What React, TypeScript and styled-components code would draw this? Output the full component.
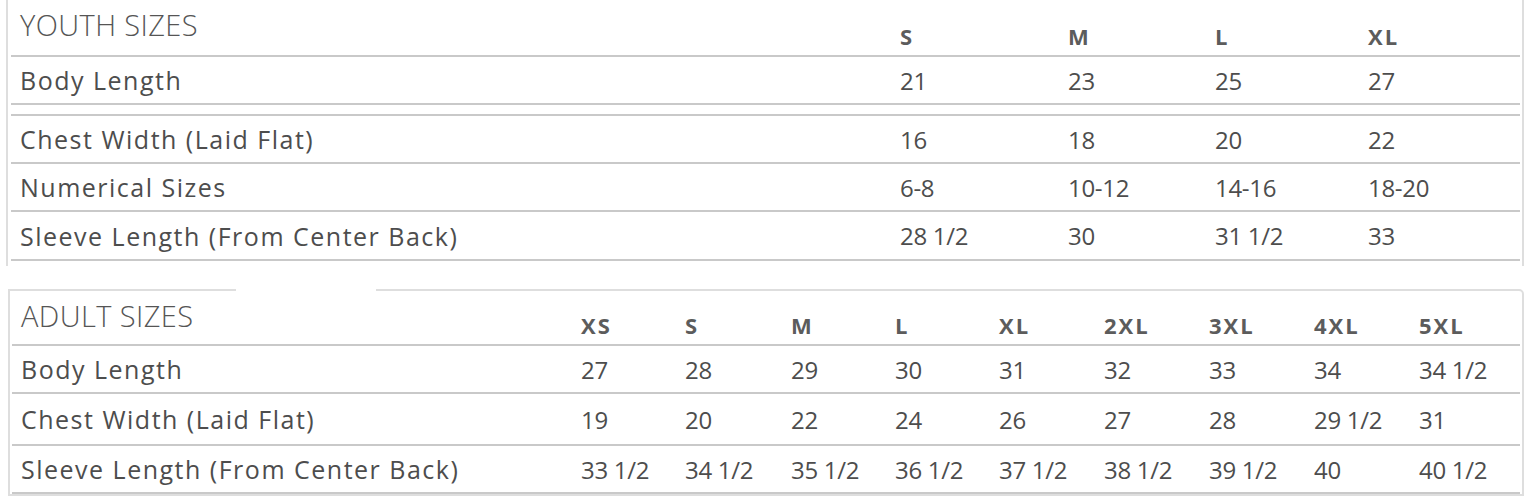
import React from 'react';
import styled, { createGlobalStyle } from 'styled-components';

type SizeRow = {
    label: string;
    values: string[];
    height?: number;
};

type SizeTableProps = {
    title: string;
    sizes: string[];
    rows: (SizeRow | 'spacer')[];
    columns: string;
    headerHeight: number;
};

const GlobalStyle = createGlobalStyle`
    body {
        margin: 0;
        background: #ffffff;
        font-family: 'Open Sans', 'Liberation Sans', sans-serif;
        color: #4d4d4d;
    }
`;

const Page = styled.div`
    display: flex;
    flex-direction: column;
    gap: 23px;
    width: 1534px;
    height: 500px;
    overflow: hidden;
`;

const YouthBox = styled.section`
    margin-left: 6px;
    width: 1518px;
    box-sizing: border-box;
    border-left: 2px solid #dedede;
    border-right: 2px solid #dedede;
    padding: 0 2px 5px 3px;
`;

const AdultBox = styled.fieldset`
    margin: 0 0 0 8px;
    width: 1516px;
    box-sizing: border-box;
    border: 2px solid #dedede;
    border-radius: 0 5px 0 0;
    padding: 0 2px;
    min-width: 0;
`;

const Notch = styled.legend`
    margin-left: 224px;
    width: 140px;
    height: 2px;
    padding: 0;
    font-size: 0;
    line-height: 0;
`;

const Row = styled.div<{ $columns: string; $height: number }>`
    display: grid;
    grid-template-columns: ${(p) => p.$columns};
    height: ${(p) => p.$height}px;
    box-sizing: border-box;
    border-bottom: 2px solid #c9c9c9;
    align-items: center;
`;

const HeaderRow = styled(Row)`
    align-items: stretch;
`;

const Title = styled.div`
    padding: 10px 0 0 9px;
    font-size: 29px;
    font-weight: 300;
    line-height: 1;
    letter-spacing: 0.4px;
    color: #555555;
    white-space: nowrap;
`;

const SizeHead = styled.div`
    align-self: end;
    padding: 0 0 8px 9px;
    font-size: 22px;
    font-weight: 700;
    line-height: 1;
    letter-spacing: 2px;
    color: #5c5c5c;
`;

const Label = styled.div`
    padding-left: 9px;
    font-size: 25px;
    letter-spacing: 1.5px;
    white-space: nowrap;
`;

const Value = styled.div`
    padding-left: 9px;
    font-size: 24px;
    letter-spacing: -0.3px;
    white-space: nowrap;
`;

const SizeTable: React.FC<SizeTableProps> = ({ title, sizes, rows, columns, headerHeight }) => {
    return (
        <>
            <HeaderRow $columns={columns} $height={headerHeight}>
                <Title>{title}</Title>
                {sizes.map((size) => (
                    <SizeHead key={size}>{size}</SizeHead>
                ))}
            </HeaderRow>
            {rows.map((row, i) =>
                row === 'spacer' ? (
                    <Row key={i} $columns={columns} $height={11} />
                ) : (
                    <Row key={row.label} $columns={columns} $height={row.height ?? 48}>
                        <Label>{row.label}</Label>
                        {row.values.map((value, j) => (
                            <Value key={j}>{value}</Value>
                        ))}
                    </Row>
                )
            )}
        </>
    );
};

const youthRows: (SizeRow | 'spacer')[] = [
    { label: 'Body Length', values: ['21', '23', '25', '27'] },
    'spacer',
    { label: 'Chest Width (Laid Flat)', values: ['16', '18', '20', '22'] },
    { label: 'Numerical Sizes', values: ['6-8', '10-12', '14-16', '18-20'] },
    { label: 'Sleeve Length (From Center Back)', values: ['28 1/2', '30', '31 1/2', '33'], height: 49 },
];

const adultRows: SizeRow[] = [
    { label: 'Body Length', values: ['27', '28', '29', '30', '31', '32', '33', '34', '34 1/2'] },
    { label: 'Chest Width (Laid Flat)', values: ['19', '20', '22', '24', '26', '27', '28', '29 1/2', '31'], height: 52 },
    { label: 'Sleeve Length (From Center Back)', values: ['33 1/2', '34 1/2', '35 1/2', '36 1/2', '37 1/2', '38 1/2', '39 1/2', '40', '40 1/2'] },
];

const App: React.FC = () => {
    return (
        <>
            <GlobalStyle />
            <Page>
                <YouthBox>
                    <SizeTable
                        title={'YOUTH SIZES'}
                        sizes={['S', 'M', 'L', 'XL']}
                        rows={youthRows}
                        columns={'880px 168px 147px 153px 1fr'}
                        headerHeight={57}
                    />
                </YouthBox>
                <AdultBox>
                    <Notch />
                    <SizeTable
                        title={'ADULT SIZES'}
                        sizes={['XS', 'S', 'M', 'L', 'XL', '2XL', '3XL', '4XL', '5XL']}
                        rows={adultRows}
                        columns={'560px 104px 106px 104px 104px 105px 105px 105px 105px 1fr'}
                        headerHeight={55}
                    />
                </AdultBox>
            </Page>
        </>
    );
};

export default App;
